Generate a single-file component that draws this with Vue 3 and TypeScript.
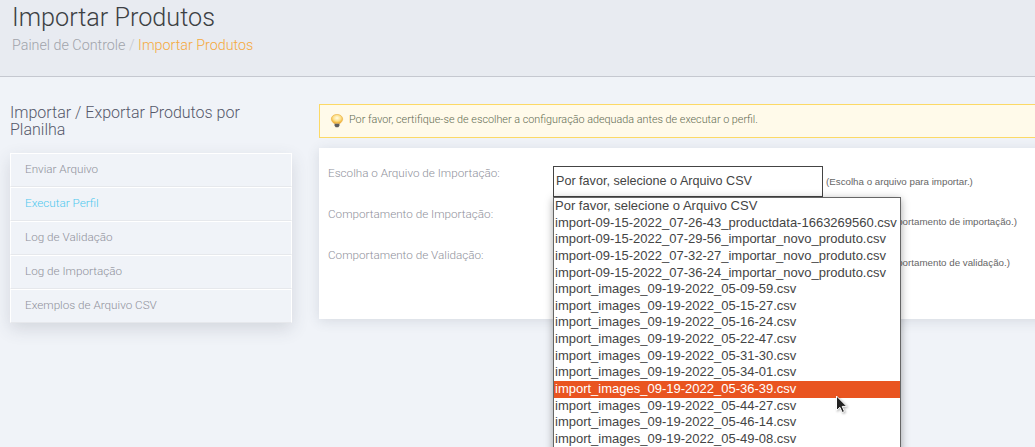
<script setup lang="ts">
const sideItems: string[] = ['Enviar Arquivo', 'Executar Perfil', 'Log de Validação', 'Log de Importação', 'Exemplos de Arquivo CSV']
const options: string[] = [
  'Por favor, selecione o Arquivo CSV',
  'import-09-15-2022_07-26-43_productdata-1663269560.csv',
  'import-09-15-2022_07-29-56_importar_novo_produto.csv',
  'import-09-15-2022_07-32-27_importar_novo_produto.csv',
  'import-09-15-2022_07-36-24_importar_novo_produto.csv',
  'import_images_09-19-2022_05-09-59.csv',
  'import_images_09-19-2022_05-15-27.csv',
  'import_images_09-19-2022_05-16-24.csv',
  'import_images_09-19-2022_05-22-47.csv',
  'import_images_09-19-2022_05-31-30.csv',
  'import_images_09-19-2022_05-34-01.csv',
  'import_images_09-19-2022_05-36-39.csv',
  'import_images_09-19-2022_05-44-27.csv',
  'import_images_09-19-2022_05-46-14.csv',
  'import_images_09-19-2022_05-49-08.csv',
]
const rows = [
  { label: 'Escolha o Arquivo de Importação:', hint: '(Escolha o arquivo para importar.)' },
  { label: 'Comportamento de Importação:', hint: '(Escolha o comportamento de importação.)' },
  { label: 'Comportamento de Validação:', hint: '(Escolha o comportamento de validação.)' },
]
</script>

<template>
  <div class="page">
    <header class="head">
      <h1>Importar Produtos</h1>
      <div class="crumbs">Painel de Controle <span class="sep">/</span> <span class="cur">Importar Produtos</span></div>
    </header>
    <div class="body">
      <aside class="side">
        <h2>Importar / Exportar Produtos por Planilha</h2>
        <ul class="menu">
          <li v-for="(s, i) in sideItems" :key="s" :class="{ on: i === 1 }">{{ s }}</li>
        </ul>
      </aside>
      <main class="main">
        <div class="alert">
          <svg width="14" height="16" viewBox="0 0 16 18">
            <defs>
              <radialGradient id="bulb" cx="50%" cy="40%" r="60%">
                <stop offset="0" stop-color="#fffce8" />
                <stop offset="0.55" stop-color="#fde08a" />
                <stop offset="1" stop-color="#eda92a" />
              </radialGradient>
            </defs>
            <path d="M8 1.500C4.200 1.500 1.500 3.700 1.500 6.800c0 2.300 1.700 3.500 3 5h7c1.300-1.500 3-2.700 3-5C14.500 3.700 11.800 1.500 8 1.500z" fill="url(#bulb)" stroke="#e6ab3c" stroke-width="0.6" />
            <path d="M5.200 12h5.600v2.500L9.500 16.200h-3L5.200 14.500z" fill="#5d5d5f" />
          </svg>
          <span class="alert-text">Por favor, certifique-se de escolher a configuração adequada antes de executar o perfil.</span>
        </div>
        <section class="card">
          <div v-for="(r, i) in rows" :key="r.label" class="row">
            <label>{{ r.label }}</label>
            <div class="control">
              <div class="select" :class="{ ghost: i > 0 }">Por favor, selecione o Arquivo CSV</div>
              <span class="hint">{{ r.hint }}</span>
            </div>
          </div>
          <div class="drop">
            <div v-for="(o, i) in options" :key="o" class="opt" :class="{ hot: i === 11 }">{{ o }}</div>
          </div>
        </section>
      </main>
    </div>
    <svg class="cursor" width="14" height="20" viewBox="0 0 14 20">
      <path d="M1.500 1v14.500l3.400-3.200 2.300 5.200 2.300-1-2.300-5.100h4.600z" fill="#222" stroke="#fff" stroke-width="1" />
    </svg>
  </div>
</template>

<style>
html, body { margin: 0; overflow: hidden; }
</style>

<style scoped>
.page {
  position: relative;
  width: 1035px;
  height: 447px;
  overflow: hidden;
  background: #f0f3f8;
  font-family: Roboto, "Liberation Sans", sans-serif;
  font-weight: 300;
}
.head {
  height: 77px;
  box-sizing: border-box;
  padding: 2px 12px 0;
  background: #e8ebf1;
  border-bottom: 1px solid #c5c8d0;
}
h1 {
  margin: 0;
  font-size: 25.200px;
  line-height: 31px;
  font-weight: 300;
  color: #3c4043;
}
.crumbs {
  margin-top: 2px;
  font-size: 14.300px;
  line-height: 20px;
  color: #a1a4ab;
}
.sep { color: #c6c9d0; }
.cur { color: #f5a93c; }
.body {
  display: flex;
  align-items: flex-start;
  padding: 27px 0 0 10px;
}
.side { width: 282px; flex: none; }
h2 {
  margin: 0 0 15px;
  font-size: 16px;
  line-height: 17px;
  font-weight: 300;
  color: #55586a;
  width: 250px;
}
.menu {
  margin: 0;
  padding: 0;
  list-style: none;
  box-shadow: 0 6px 16px rgba(60, 70, 90, 0.16);
}
.menu li {
  height: 34px;
  box-sizing: border-box;
  padding-left: 14px;
  line-height: 30px;
  font-size: 11.700px;
  color: #8f919b;
  background: #f0f3f8;
  border: 1px solid #fff;
  border-bottom: 1.500px solid #e6e8ec;
}
.menu li.on { color: #4fc8ee; }
.main {
  flex: none;
  width: 730px;
  margin-left: 27px;
}
.alert {
  height: 34px;
  box-sizing: border-box;
  display: flex;
  align-items: center;
  gap: 5px;
  padding-left: 10px;
  background: #fffaea;
  border: 1px solid #fcd966;
  font-size: 10.800px;
  color: #5f6b52;
  font-weight: 300;
}
.alert-text { margin-top: -3px; }
.card {
  position: relative;
  margin-top: 10px;
  height: 171px;
  box-sizing: border-box;
  padding: 18px 0 0 9px;
  background: #fff;
  box-shadow: 0 2px 12px rgba(60, 70, 90, 0.14);
}
.row {
  display: flex;
  height: 41px;
}
.row label {
  width: 225px;
  flex: none;
  font-size: 11.700px;
  line-height: 14px;
  color: #8f919b;
}
.control {
  display: flex;
  align-items: flex-start;
  gap: 3px;
}
.select {
  width: 270px;
  height: 31px;
  box-sizing: border-box;
  padding: 7px 0 0 2px;
  border: 1px solid #444;
  background: #fff;
  font-family: "Liberation Sans", sans-serif;
  font-weight: 400;
  font-size: 12.600px;
  line-height: 15px;
  color: #444;
}
.select.ghost { visibility: hidden; }
.hint {
  font-family: "Liberation Sans", sans-serif;
  font-weight: 400;
  font-size: 9.750px;
  line-height: 32px;
  color: #666;
  white-space: nowrap;
}
.ghost + .hint {
  margin-left: 4px;
  line-height: 30px;
}
.drop {
  position: absolute;
  left: 234px;
  top: 49px;
  width: 348px;
  box-sizing: border-box;
  padding-bottom: 20px;
  border: 1px solid #666;
  background: #fff;
  box-shadow: 0 2px 8px rgba(0, 0, 0, 0.35);
  font-family: "Liberation Sans", sans-serif;
  font-weight: 400;
  font-size: 13px;
}
.opt {
  height: 16.640px;
  line-height: 16.640px;
  padding-left: 1px;
  color: #444;
  white-space: nowrap;
}
.opt.hot { background: #e95420; color: #fff; }
.cursor {
  position: absolute;
  left: 835px;
  top: 395px;
  filter: drop-shadow(1px 1px 1px rgba(0, 0, 0, 0.3));
}
</style>
